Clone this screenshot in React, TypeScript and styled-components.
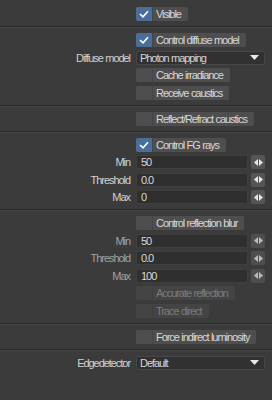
import React from 'react'
import styled, { createGlobalStyle } from 'styled-components'

const GlobalStyle = createGlobalStyle`
  body {
    margin: 0;
    background: #3b3b3b;
    font-family: "Liberation Sans", Arial, sans-serif;
    font-size: 11px;
    letter-spacing: -1.05px;
    word-spacing: 0.5px;
    color: #d4d4d4;
  }
`

const Panel = styled.div`
  width: 272px;
  height: 400px;
  display: flex;
  flex-direction: column;
  background: #3b3b3b;
`

const Section = styled.div<{ $top?: number }>`
  display: grid;
  grid-template-columns: 130px 1fr;
  column-gap: 6px;
  row-gap: 3.5px;
  padding: ${(p) => p.$top ?? 5}px 7px 5px 0;
  align-items: center;
`

const Divider = styled.div`
  height: 0;
  border-top: 1px solid #2a2a2a;
  border-bottom: 1px solid #464646;
`

const Label = styled.div<{ $dim?: boolean }>`
  grid-column: 1;
  text-align: right;
  line-height: 14px;
  white-space: nowrap;
  color: ${(p) => (p.$dim ? '#a2a2a2' : '#d2d2d2')};
`

const CheckWrap = styled.div<{ $disabled?: boolean }>`
  grid-column: 2;
  justify-self: start;
  display: inline-flex;
  height: 14px;
  border-radius: 2px;
  overflow: hidden;
  background: ${(p) => (p.$disabled ? '#444444' : '#4e4e4e')};
  color: ${(p) => (p.$disabled ? '#7c7c7c' : '#d8d8d8')};
`

const CheckBox = styled.div<{ $on?: boolean; $disabled?: boolean }>`
  width: 16px;
  height: 14px;
  display: flex;
  align-items: center;
  justify-content: center;
  background: ${(p) => (p.$on ? '#4a6d99' : p.$disabled ? '#444444' : '#4e4e4e')};
  border-right: 1px solid ${(p) => (p.$disabled ? '#3e3e3e' : '#454545')};
`

const CheckText = styled.span`
  padding: 0 7px 0 3px;
  line-height: 14px;
  white-space: nowrap;
`

const Select = styled.div`
  grid-column: 2;
  height: 12px;
  display: flex;
  align-items: center;
  justify-content: space-between;
  background: #313131;
  border: 1px solid #474747;
  border-radius: 2px;
  padding: 0 5px 0 3px;
  line-height: 12px;
`

const NumberRow = styled.div`
  grid-column: 2;
  display: flex;
  gap: 3px;
  height: 14px;
`

const Field = styled.div`
  flex: 1;
  height: 12px;
  background: #2f2f2f;
  border: 1px solid #3f3f3f;
  border-radius: 2px;
  padding: 0 4px;
  line-height: 12px;
  color: #d8d8d8;
`

const Spinner = styled.div<{ $dim?: boolean }>`
  width: 14px;
  height: 14px;
  border-radius: 2px;
  background: #555555;
  display: flex;
  align-items: center;
  justify-content: center;
  opacity: ${(p) => (p.$dim ? 0.75 : 1)};
`

const Check = () => (
  <svg width="10" height="8" viewBox="0 0 10 8">
    <path d="M1 4 L4 6.8 L9 1.2" fill="none" stroke="#ffffff" strokeWidth="1.6" />
  </svg>
)

const Arrows = () => (
  <svg width="9" height="7" viewBox="0 0 9 7">
    <path d="M0 3.5 L4 0 L4 7 Z M5 0 L9 3.5 L5 7 Z" fill="#e6e6e6" />
  </svg>
)

const Caret = () => (
  <svg width="9" height="5" viewBox="0 0 9 5">
    <path d="M0 0 L9 0 L4.5 5 Z" fill="#e8e8e8" />
  </svg>
)

function Toggle({ label, on, disabled }: { label: string; on?: boolean; disabled?: boolean }) {
  return (
    <CheckWrap $disabled={disabled}>
      <CheckBox $on={on} $disabled={disabled}>{on && <Check />}</CheckBox>
      <CheckText>{label}</CheckText>
    </CheckWrap>
  )
}

function NumberField({ label, value, dim }: { label: string; value: string; dim?: boolean }) {
  return (
    <>
      <Label $dim={dim}>{label}</Label>
      <NumberRow>
        <Field>{value}</Field>
        <Spinner $dim={dim}>
          <Arrows />
        </Spinner>
      </NumberRow>
    </>
  )
}

export default function App() {
  return (
    <Panel>
      <GlobalStyle />
      <Section $top={7}>
        <Toggle label="Visible" on />
      </Section>
      <Divider />
      <Section>
        <Toggle label="Control diffuse model" on />
        <Label>Diffuse model</Label>
        <Select>
          <span>Photon mapping</span>
          <Caret />
        </Select>
        <Toggle label="Cache irradiance" />
        <Toggle label="Receive caustics" />
      </Section>
      <Divider />
      <Section>
        <Toggle label="Reflect/Refract caustics" />
      </Section>
      <Divider />
      <Section>
        <Toggle label="Control FG rays" on />
        <NumberField label="Min" value="50" />
        <NumberField label="Threshold" value="0.0" />
        <NumberField label="Max" value="0" />
      </Section>
      <Divider />
      <Section>
        <Toggle label="Control reflection blur" />
        <NumberField label="Min" value="50" dim />
        <NumberField label="Threshold" value="0.0" dim />
        <NumberField label="Max" value="100" dim />
        <Toggle label="Accurate reflection" disabled />
        <Toggle label="Trace direct" disabled />
      </Section>
      <Divider />
      <Section>
        <Toggle label="Force indirect luminosity" />
      </Section>
      <Divider />
      <Section>
        <Label>Edgedetector</Label>
        <Select>
          <span>Default</span>
          <Caret />
        </Select>
      </Section>
    </Panel>
  )
}
